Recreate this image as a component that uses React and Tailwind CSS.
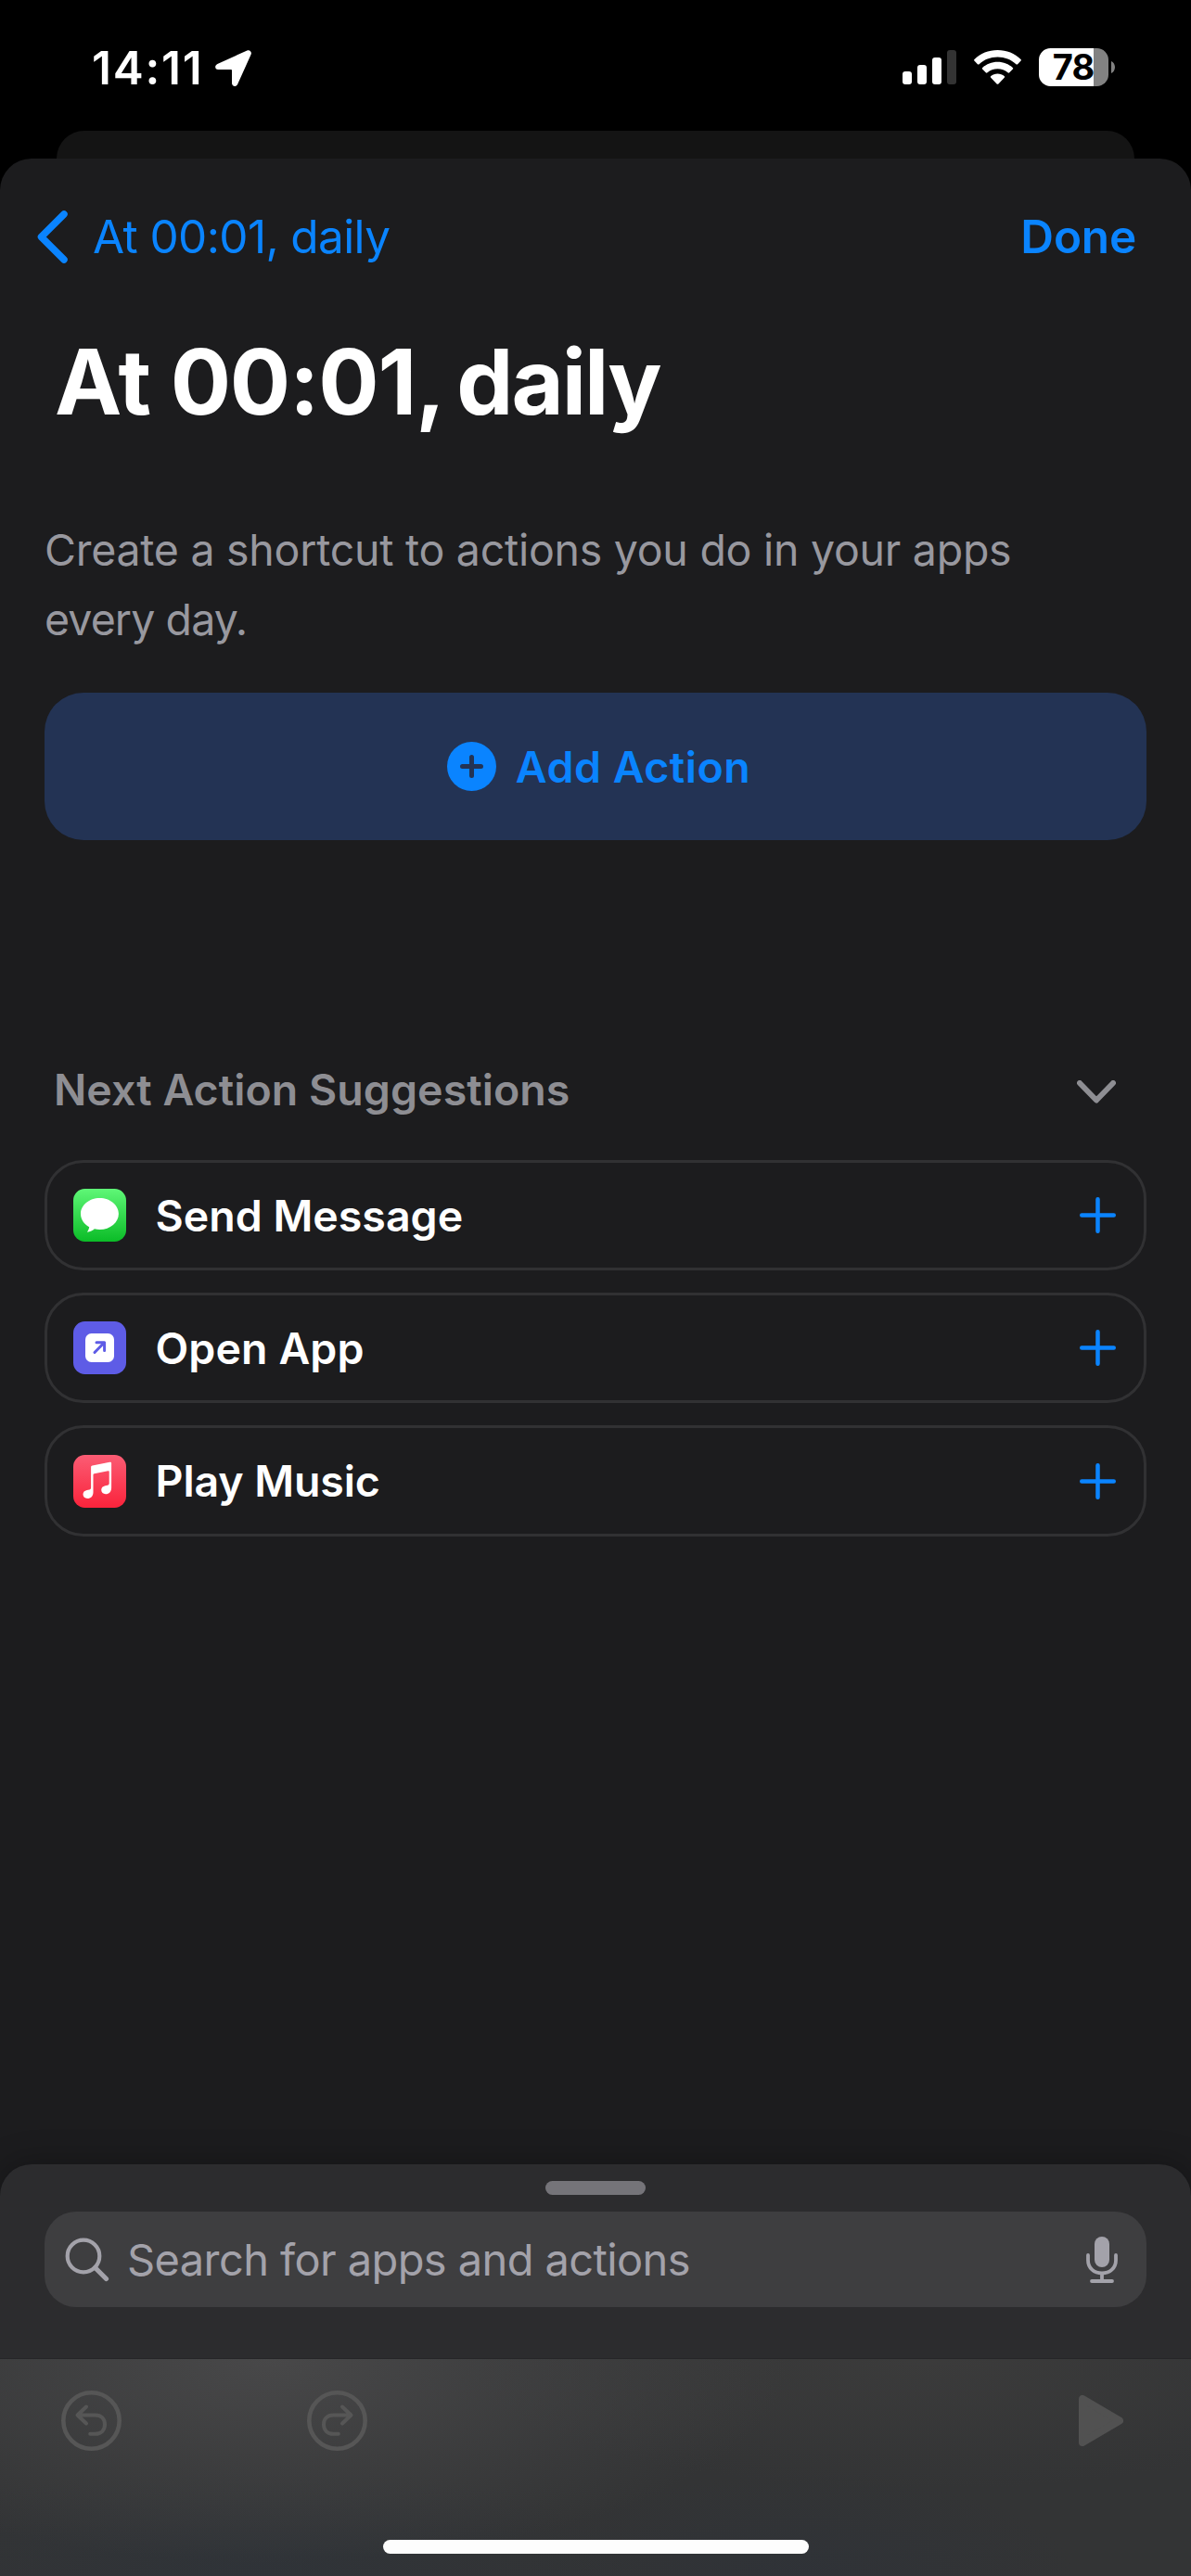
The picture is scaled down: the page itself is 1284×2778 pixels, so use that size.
import React from "react";

const rows = [
  { label: "Send Message", icon: MessageIcon, height: "h-[119px]", track: "tracking-[0]" },
  { label: "Open App", icon: OpenAppIcon, height: "h-[119px]", track: "tracking-[0.1px]" },
  { label: "Play Music", icon: MusicIcon, height: "h-[120px]", track: "tracking-[-0.1px]" },
];

function MessageIcon() {
  return (
    <svg width="57" height="57" viewBox="0 0 57 57">
      <defs>
        <linearGradient id="msg" x1="0" y1="0" x2="0" y2="1">
          <stop offset="0" stopColor="#5ff777" />
          <stop offset="1" stopColor="#0bbc27" />
        </linearGradient>
      </defs>
      <rect width="57" height="57" rx="12.5" fill="url(#msg)" />
      <path
        fill="#fff"
        d="M28.500 10C17.200 10 8 17.600 8 27c0 6 3.600 11.200 9.200 14.200-.3 2-1.200 3.900-2.300 5.500 3.300-.4 6-1.800 8-3.400 1.800.4 3.700.7 5.700.7 11.300 0 20.300-7.600 20.300-17S39.800 10 28.500 10z"
      />
    </svg>
  );
}

function OpenAppIcon() {
  return (
    <svg width="57" height="57" viewBox="0 0 57 57">
      <rect width="57" height="57" rx="12.5" fill="#5e5ce6" />
      <rect x="13" y="13" width="31" height="31" rx="6.500" fill="#fff" />
      <path d="M23 33.500L33 23.300M25 22.700h8.600v8.800" fill="none" stroke="#5e5ce6" strokeWidth="3" strokeLinecap="round" strokeLinejoin="round" />
    </svg>
  );
}

function MusicIcon() {
  return (
    <svg width="57" height="57" viewBox="0 0 57 57">
      <defs>
        <linearGradient id="mus" x1="0" y1="0" x2="0" y2="1">
          <stop offset="0" stopColor="#fb5c74" />
          <stop offset="1" stopColor="#fa233b" />
        </linearGradient>
      </defs>
      <rect width="57" height="57" rx="12.5" fill="url(#mus)" />
      <path
        fill="#fff"
        d="M39.300 7.700L20.600 11.500c-1 .2-1.500.8-1.500 1.800v21.900c0 1.300-.6 2-1.800 2.300l-2.600.5c-2.700.6-4.200 2.200-4.200 4.600 0 2.600 2 4.400 4.700 4.400 3.800 0 6.300-2.800 6.300-6.800V21.600c0-.8.3-1.100 1-1.300l15-3c.8-.2 1.200.1 1.200.8v12.300c0 1.300-.6 2-1.800 2.300l-2.500.5c-2.700.6-4.200 2.200-4.200 4.600 0 2.600 2 4.400 4.700 4.400 3.700 0 6.200-2.800 6.200-6.800V9.100c0-1.100-.7-1.600-1.800-1.400z"
      />
    </svg>
  );
}

function StatusBar() {
  return (
    <div className="flex h-[141px] items-start justify-between pl-[99px] pr-[82px]">
      <div className="flex pt-[43px]">
        <span className="w-[133px] text-[49.500px] leading-[60px] font-semibold tracking-[1.8px] text-white">14:11</span>
        <svg className="mt-[11px]" width="39" height="39" viewBox="0 0 39 39">
          <path
            fill="#fff"
            d="M34.400.5L2.400 14.900C-1 16.500-.4 21 3.200 21h13.900c.6 0 .9.300.9.900v13.700c0 3.800 4.700 4.600 6.200 1.200L38.600 4.800C39.800 2 37.300-.7 34.400.5z"
          />
        </svg>
      </div>
      <div className="flex pt-[52px]">
        <div className="flex h-[39px] items-end gap-[6px]">
          <div className="h-[14px] w-[10px] rounded-[3px] bg-white" />
          <div className="h-[21px] w-[10px] rounded-[3px] bg-white" />
          <div className="h-[29px] w-[10px] rounded-[3px] bg-white" />
          <div className="h-[37px] w-[10px] rounded-[3px] bg-[#333333]" />
        </div>
        <svg className="mt-[2px] ml-[19px]" width="51" height="37" viewBox="0 0 51 37" fill="#fff">
          <path d="M25.500 0C15.700 0 6.900 3.700.5 9.900c-.6.600-.6 1.200-.1 1.700l3.500 3.600c.5.500 1.200.5 1.700 0C10.900 10.300 17.800 7.500 25.500 7.500s14.600 2.800 19.900 7.700c.5.500 1.200.5 1.700 0l3.500-3.600c.5-.5.500-1.100-.1-1.700C44.100 3.700 35.300 0 25.500 0z" />
          <path d="M25.500 12.700c-6.300 0-12.100 2.400-16.300 6.200-.6.600-.6 1.200-.1 1.700l3.700 3.700c.5.500 1.100.5 1.700 0 2.900-2.600 6.800-4.100 11-4.100s8.100 1.500 11 4.100c.6.500 1.200.5 1.700 0l3.700-3.700c.5-.5.500-1.100-.1-1.700-4.200-3.800-10-6.200-16.300-6.200z" />
          <path d="M25.500 25.500c-2.800 0-5.300 1-7.200 2.600-.6.500-.6 1.100-.1 1.700l6.400 6.600c.6.600 1.200.6 1.800 0l6.400-6.600c.5-.6.500-1.200-.1-1.700-1.900-1.600-4.400-2.600-7.200-2.600z" />
        </svg>
        <div className="ml-[19px] flex h-[41px] w-[75px] items-center justify-center rounded-[12.500px] bg-[linear-gradient(90deg,#fff_59px,#828282_59px)]">
          <span className="pr-px text-[38px] leading-[41px] font-bold tracking-[-1px] text-black">78</span>
        </div>
        <svg className="mt-[14px] ml-[3px]" width="4" height="13" viewBox="0 0 4 13">
          <path d="M0 0c2.400 1 4 3.600 4 6.500S2.400 12 0 13z" fill="#828282" />
        </svg>
      </div>
    </div>
  );
}

function UndoIcon({ flip }) {
  return (
    <svg className={flip ? "-scale-x-100" : ""} width="65" height="65" viewBox="0 0 65 65" fill="none" stroke="#565656" strokeLinecap="round" strokeLinejoin="round">
      <circle cx="32.500" cy="32.500" r="30.200" strokeWidth="4.600" />
      <path d="M27 17.500L17.500 26.500l9.500 9M18.500 26.500h18c7 0 10.500 4.300 10.500 10s-3.500 10.300-10.500 10.300h-5.300" strokeWidth="4" />
    </svg>
  );
}

export default function App() {
  return (
    <div className="flex h-[2778px] w-[1284px] flex-col overflow-hidden bg-black font-['Inter','Liberation_Sans',sans-serif]">
      <StatusBar />
      <div className="mx-[61px] h-[30px] shrink-0 rounded-t-[30px] bg-[#141414]" />
      <main className="flex min-h-0 flex-1 flex-col rounded-t-[34px] bg-[#1c1c1e]">
        <nav className="flex items-center justify-between pt-[54px] pr-[59px] pl-[40px] text-[#0a84ff]">
          <div className="flex items-center">
            <svg width="33" height="58" viewBox="0 0 33 58" fill="none" stroke="#0a84ff" strokeWidth="7.500" strokeLinecap="round" strokeLinejoin="round">
              <path d="M29 5L4.500 29.500 29 54" />
            </svg>
            <span className="ml-[27px] text-[49.500px] leading-[60px] tracking-[-0.620px]">At 00:01, daily</span>
          </div>
          <span className="text-[49.500px] leading-[60px] font-semibold tracking-[-0.200px]">Done</span>
        </nav>

        <h1 className="mt-[68px] ml-[59px] text-[97px] leading-[118px] font-bold tracking-[-1.200px] whitespace-nowrap text-white">
          At 00:01,<span className="-ml-[8px] tracking-[-2px]"> daily</span>
        </h1>

        <p className="mt-[85px] ml-[48px] text-[46.500px] leading-[75px] tracking-[-0.270px] text-[#98989f]">
          Create a shortcut to actions you do in your apps
          <br />
          <span className="tracking-[-0.900px]">every day.</span>
        </p>

        <button className="mx-[48px] mt-[41px] flex h-[159px] shrink-0 items-center justify-center rounded-[42px] bg-[#233354] pl-[7px] text-[#0a84ff]">
          <svg width="53" height="53" viewBox="0 0 53 53">
            <circle cx="26.500" cy="26.500" r="26.500" fill="#0a84ff" />
            <path d="M26.500 16.500v20M16.500 26.500h20" stroke="#233354" strokeWidth="5" strokeLinecap="round" />
          </svg>
          <span className="ml-[21px] text-[46.500px] leading-[60px] font-semibold tracking-[0.500px]">Add Action</span>
        </button>

        <section className="mt-[237px] flex flex-col px-[48px]">
          <div className="flex h-[64px] items-center justify-between pr-[33px] pl-[10px] text-[#8e8e93]">
            <h2 className="text-[46.500px] leading-[64px] font-semibold tracking-[0.050px]">Next Action Suggestions</h2>
            <svg className="mt-[4px]" width="42" height="25" viewBox="0 0 42 25" fill="none" stroke="#8e8e93" strokeWidth="6" strokeLinecap="round" strokeLinejoin="round">
              <path d="M3 3L21 21.500 39 3" />
            </svg>
          </div>
          <div className="mt-[44px] flex flex-col gap-[24px]">
            {rows.map(({ label, icon: Icon, height, track }) => (
              <div key={label} className={`flex items-center rounded-[42px] border-[3px] border-[#313133] pr-[30px] pl-[28px] ${height}`}>
                <Icon />
                <span className={`ml-[31.500px] flex-1 text-[46.500px] leading-[60px] font-semibold text-white ${track}`}>{label}</span>
                <svg width="39" height="39" viewBox="0 0 39 39" stroke="#0a84ff" strokeWidth="4.500" strokeLinecap="round">
                  <path d="M19.500 2.250v34.500M2.250 19.500h34.500" />
                </svg>
              </div>
            ))}
          </div>
        </section>

        <footer className="mt-auto flex flex-col">
          <div className="flex h-[209px] flex-col items-center rounded-t-[34px] bg-[#2c2c2e] px-[48px] pt-[18px] shadow-[0_0_36px_rgba(0,0,0,0.300)]">
            <div className="h-[15px] w-[108px] rounded-full bg-[#757479]" />
            <div className="mt-[18px] flex h-[103px] w-full items-center rounded-[34px] bg-[#3e3e40] pr-[31px] pl-[22px]">
              <svg width="48" height="48" viewBox="0 0 48 48" fill="none" stroke="#a3a2aa" strokeLinecap="round">
                <circle cx="20" cy="20" r="17.300" strokeWidth="4.200" />
                <path d="M32.500 32.500L44.500 44.500" strokeWidth="5.200" />
              </svg>
              <span className="ml-[19px] flex-1 text-[47px] leading-[60px] tracking-[-0.600px] text-[#a3a2aa]">Search for apps and actions</span>
              <svg width="34" height="50" viewBox="0 0 34 50" fill="none" stroke="#a3a2aa" strokeLinecap="round">
                <rect x="9" width="16" height="33" rx="8" fill="#a3a2aa" stroke="none" />
                <path d="M2 20v5.500C2 34 8.500 39.500 17 39.500S32 34 32 25.500V20M17 40v7M6 48h22" strokeWidth="3.800" />
              </svg>
            </div>
          </div>
          <div className="h-px bg-[#252527]" />
          <div className="flex h-[234px] flex-col items-center bg-[#333435] bg-[radial-gradient(560px_220px_at_290px_0px,rgba(72,72,73,1),rgba(72,72,73,0)),radial-gradient(420px_120px_at_270px_234px,rgba(46,51,57,0.800),rgba(46,51,57,0)),radial-gradient(300px_110px_at_860px_234px,rgba(46,50,56,0.800),rgba(46,50,56,0)),radial-gradient(500px_140px_at_1000px_0px,rgba(60,60,60,0.900),rgba(60,60,60,0))]">
            <div className="flex w-full items-center pt-[34px] pr-[73px] pl-[66px]">
              <UndoIcon />
              <div className="ml-[200px] flex flex-1">
                <UndoIcon flip />
              </div>
              <svg width="48" height="55" viewBox="0 0 48 55">
                <path d="M4 4v47L44 27.500z" fill="#515151" stroke="#515151" strokeWidth="8" strokeLinejoin="round" />
              </svg>
            </div>
            <div className="mt-[96px] h-[15px] w-[459px] rounded-full bg-[#fdfdfd]" />
          </div>
        </footer>
      </main>
    </div>
  );
}
